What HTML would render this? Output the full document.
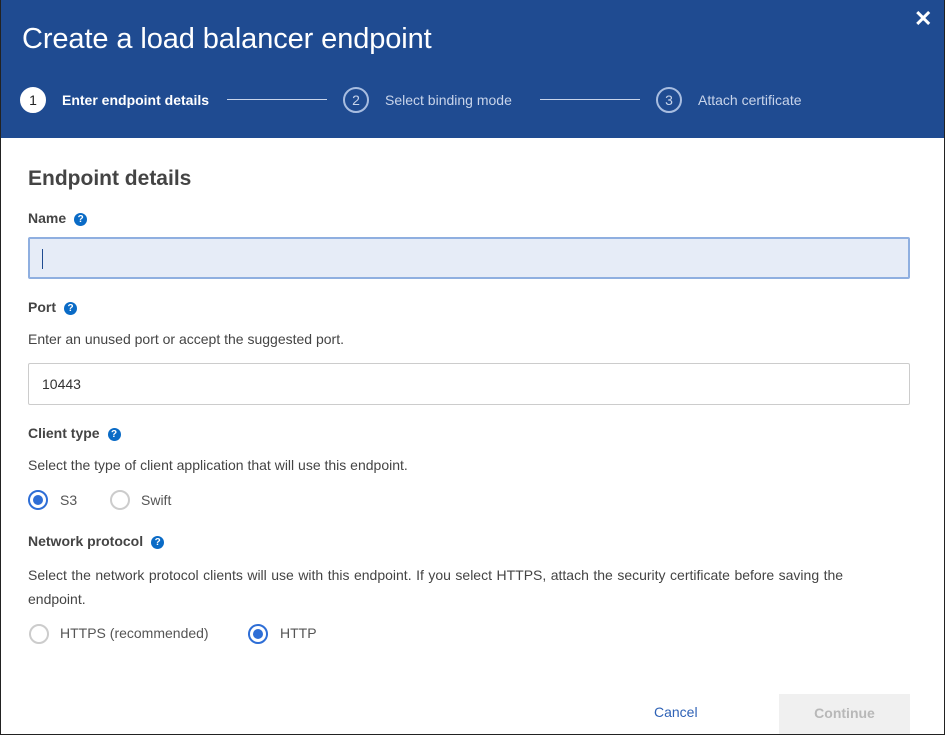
<!DOCTYPE html>
<html><head><style>
*{box-sizing:border-box;margin:0;padding:0}
body{width:945px;height:735px;overflow:hidden;background:#fff;font-family:"Liberation Sans",sans-serif;color:#333;position:relative}
.frame{position:absolute;inset:0;border:1px solid #222;border-top:none}
.hdr{position:absolute;left:0;top:0;width:945px;height:138px;background:#1f4b91;color:#fff}
.title{position:absolute;left:22px;top:23px;font-size:29px;font-weight:normal;letter-spacing:-0.1px}
.close{position:absolute;left:914px;top:6px;font-size:22px;font-weight:bold}
.step{position:absolute;top:87px;height:26px;display:flex;align-items:center;font-size:14px}
.circ{width:26px;height:26px;border-radius:50%;border:2px solid #a8bde0;color:#c8d4ea;display:flex;align-items:center;justify-content:center;font-size:14px;margin-right:16px}
.line{position:absolute;top:99px;height:1px;background:#c8d4ea}
.lbl{position:absolute;left:28px;font-size:14px;font-weight:bold;color:#444}
.q{display:inline-block;width:13px;height:13px;border-radius:50%;background:#0a6bc6;color:#fff;font-size:10px;text-align:center;line-height:13px;margin-left:8px;vertical-align:1px}
.txt{position:absolute;left:28px;font-size:14px;color:#444}
.inp{position:absolute;left:28px;width:882px;height:42px;border:1px solid #ccc;border-radius:2px}
.radio{position:absolute;width:20px;height:20px;border-radius:50%;border:2px solid #ccc}
.radio.on{border:2px solid #2e6ed6}
.radio.on::after{content:"";position:absolute;left:3px;top:3px;width:10px;height:10px;border-radius:50%;background:#2e6ed6}
.rl{position:absolute;font-size:14px;color:#555}
</style></head><body>
<div class="hdr">
<div class="title">Create a load balancer endpoint</div>
<div class="close">✕</div>
<div class="step" style="left:20px"><div class="circ" style="background:#fff;color:#222;border-color:#fff">1</div><b style="font-size:14px">Enter endpoint details</b></div>
<div class="line" style="left:227px;width:100px"></div>
<div class="step" style="left:343px;color:#c8d4ea"><div class="circ">2</div>Select binding mode</div>
<div class="line" style="left:540px;width:100px"></div>
<div class="step" style="left:656px;color:#c8d4ea"><div class="circ">3</div>Attach certificate</div>
</div>
<div style="position:absolute;left:28px;top:167px;font-size:21px;font-weight:bold;color:#444">Endpoint details</div>
<div class="lbl" style="top:210px">Name<span class="q">?</span></div>
<div class="inp" style="top:237px;background:#e6ecf7;border:2px solid #8fafe0"><div style="position:absolute;left:12px;top:10px;width:1px;height:20px;background:#1f4b91"></div></div>
<div class="lbl" style="top:299px">Port<span class="q">?</span></div>
<div class="txt" style="top:331px">Enter an unused port or accept the suggested port.</div>
<div class="inp" style="top:363px"><span style="position:absolute;left:13px;top:12px;font-size:14px;color:#333">10443</span></div>
<div class="lbl" style="top:425px">Client type<span class="q">?</span></div>
<div class="txt" style="top:457px">Select the type of client application that will use this endpoint.</div>
<div class="radio on" style="left:28px;top:490px"></div><div class="rl" style="left:60px;top:492px">S3</div>
<div class="radio" style="left:110px;top:490px"></div><div class="rl" style="left:141px;top:492px">Swift</div>
<div class="lbl" style="top:533px">Network protocol<span class="q">?</span></div>
<div class="txt" style="top:563px;width:900px;line-height:24px;word-spacing:0.6px">Select the network protocol clients will use with this endpoint. If you select HTTPS, attach the security certificate before saving the<br>endpoint.</div>
<div class="radio" style="left:29px;top:624px"></div><div class="rl" style="left:60px;top:625px">HTTPS (recommended)</div>
<div class="radio on" style="left:248px;top:624px"></div><div class="rl" style="left:280px;top:625px">HTTP</div>
<div style="position:absolute;left:654px;top:704px;font-size:14px;color:#2f62b6">Cancel</div>
<div style="position:absolute;left:779px;top:694px;width:131px;height:41px;background:#f0f0f0;color:#b8b8b8;font-size:14px;font-weight:bold;text-align:center;line-height:38px">Continue</div>
<div class="frame"></div>
</body></html>
